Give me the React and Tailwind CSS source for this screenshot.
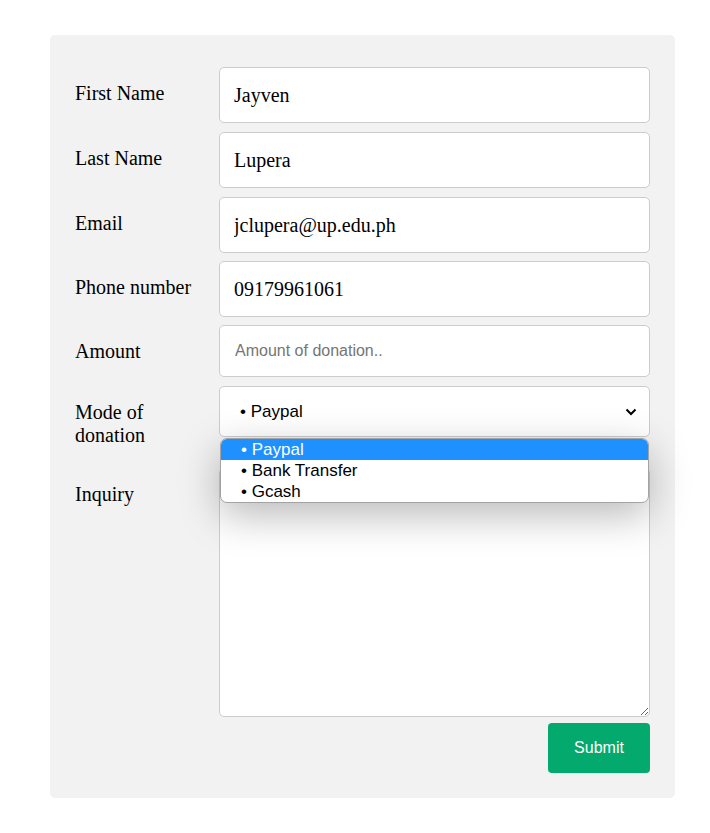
import React from "react";

const serif = "font-['Liberation_Serif',serif]";
const sans = "font-['Liberation_Sans',Arial,sans-serif]";

const Row = ({ label, children, className = "" }) => (
  <div className={`flex items-start ${className}`}>
    <label className={`w-[144px] shrink-0 pt-[15px] pr-3 text-[20px] leading-[23px] text-black ${serif}`}>
      {label}
    </label>
    <div className="flex-1">{children}</div>
  </div>
);

const TextInput = ({ value }) => (
  <input
    type="text"
    defaultValue={value}
    className={`block h-[56px] w-full rounded-[5px] border border-[#ccc] bg-white px-[14px] text-[20px] text-black outline-none ${serif}`}
  />
);

const options = ["• Paypal", "• Bank Transfer", "• Gcash"];

export default function App() {
  return (
    <div className="min-h-[833px] bg-white pt-[35px] pl-[50px]">
      <form className="flex w-[625px] flex-col rounded-[5px] bg-[#f2f2f2] p-[25px]">
        <Row label="First Name" className="mt-[7px]">
          <TextInput value="Jayven" />
        </Row>
        <Row label="Last Name" className="mt-[9px]">
          <TextInput value="Lupera" />
        </Row>
        <Row label="Email" className="mt-[9px]">
          <TextInput value="jclupera@up.edu.ph" />
        </Row>
        <Row label="Phone number" className="mt-[8px]">
          <TextInput value="09179961061" />
        </Row>
        <Row label="Amount" className="mt-[8px]">
          <input
            type="text"
            placeholder="Amount of donation.."
            className={`block h-[52px] w-full rounded-[5px] border border-[#ccc] bg-white px-[15px] text-[16px] text-black outline-none placeholder:text-[#757575] ${sans}`}
          />
        </Row>
        <Row label={<>Mode of<br />donation</>} className="mt-[9px]">
          <div className="relative z-10">
            <div className={`flex h-[51px] w-full items-center justify-between rounded-[5px] border border-[#ccc] bg-white pl-[20px] pr-[6px] text-[17px] text-black ${sans}`}>
              <span>• Paypal</span>
              <svg width="12" height="8" viewBox="0 0 12 8" className="mr-[6px]">
                <path d="M1.5 1.5 L6 6 L10.5 1.5" fill="none" stroke="black" strokeWidth="2" />
              </svg>
            </div>
            <ul className={`absolute left-[1px] right-[1px] top-[52px] overflow-hidden rounded-[7px] border border-[#a3a3a3] bg-white py-0 text-[17px] leading-[21px] shadow-[0_12px_40px_rgba(0,0,0,0.28)] ${sans}`}>
              {options.map((o, i) => (
                <li
                  key={o}
                  className={`h-[21px] pl-[20px] ${i === 0 ? "bg-[#1e90ff] text-white" : "text-black"}`}
                >
                  {o}
                </li>
              ))}
            </ul>
          </div>
        </Row>
        <Row label="Inquiry" className="mt-[21px]">
          <textarea
            className={`block h-[249px] w-full resize-y rounded-[5px] border border-[#ccc] bg-white p-[12px] text-[20px] outline-none ${serif}`}
          />
        </Row>
        <button
          type="button"
          className={`mt-[6px] h-[50px] w-[102px] self-end rounded-[4px] bg-[#04aa6d] text-[16px] text-white ${sans}`}
        >
          Submit
        </button>
      </form>
    </div>
  );
}
